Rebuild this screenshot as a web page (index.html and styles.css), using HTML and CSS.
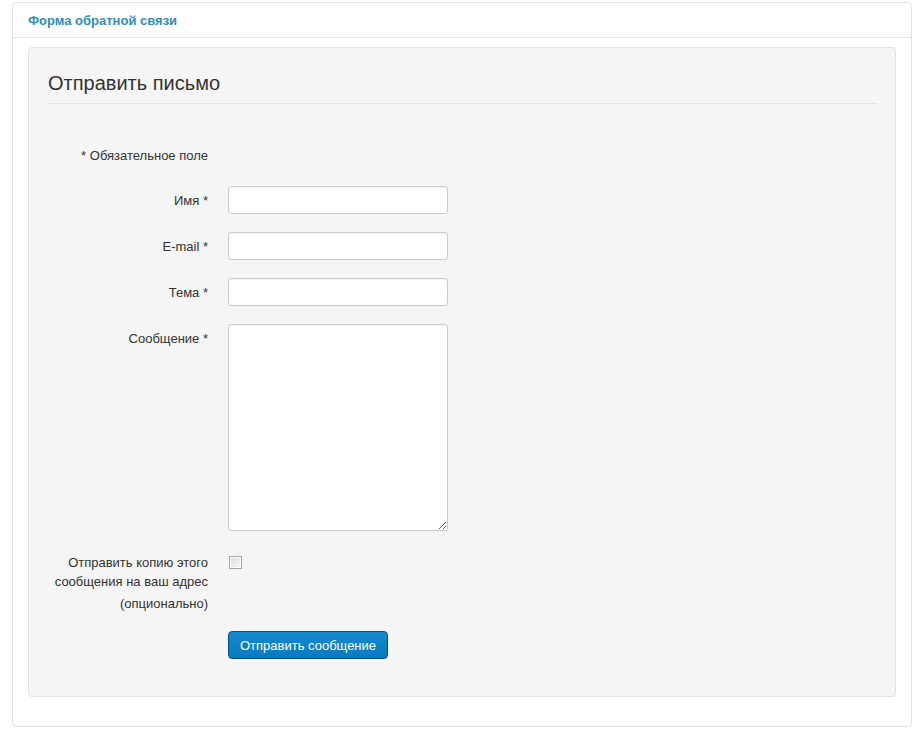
FILE: index.html
```html
<!doctype html>
<html>
<head>
<meta charset="UTF-8">
<title>Форма обратной связи</title>
<link rel="stylesheet" href="styles.css">
</head>
<body>
	<div class="panel">
		<div class="panel-head">Форма обратной связи</div>
		<div class="well">
			<h2>Отправить письмо</h2>
			<form class="form">
				<div class="row row-note">
					<div class="label">* Обязательное поле</div>
				</div>
				<div class="row">
					<label class="label">Имя *</label>
					<div class="controls"><input type="text" class="field"></div>
				</div>
				<div class="row">
					<label class="label">E-mail *</label>
					<div class="controls"><input type="text" class="field"></div>
				</div>
				<div class="row">
					<label class="label">Тема *</label>
					<div class="controls"><input type="text" class="field"></div>
				</div>
				<div class="row">
					<label class="label">Сообщение *</label>
					<div class="controls"><textarea class="field area"></textarea></div>
				</div>
				<div class="row row-copy">
					<label class="label label-copy">Отправить копию этого сообщения на ваш адрес<span class="opt">(опционально)</span></label>
					<div class="controls"><span class="check"></span></div>
				</div>
				<div class="row">
					<div class="label"></div>
					<div class="controls"><button type="button" class="btn">Отправить сообщение</button></div>
				</div>
			</form>
		</div>
	</div>
</body>
</html>
```

FILE: styles.css
```css
* { box-sizing: border-box }
body {
	margin: 0;
	padding: 2px 6px 0 12px;
	font-family: "Liberation Sans", Arial, sans-serif;
	font-size: 13px;
	color: #333;
	background: #fff;
}
.panel {
	width: 900px;
	height: 725px;
	border: 1px solid #e2e2e2;
	border-radius: 4px;
	background: #fff;
}
.panel-head {
	height: 35px;
	padding: 10px 15px 0;
	border-bottom: 1px solid #e6e6e6;
	color: #2f8fba;
	font-weight: bold;
	font-size: 13px;
}
.well {
	margin: 9px 15px 0;
	height: 650px;
	padding: 23px 18px 0 19px;
	background: #f5f5f5;
	border: 1px solid #e3e3e3;
	border-radius: 4px;
}
h2 {
	margin: 0;
	padding-bottom: 8px;
	border-bottom: 1px solid #e5e5e5;
	font-size: 20px;
	font-weight: normal;
	line-height: 24px;
	color: #333;
}
.form { padding-top: 37px }
.row {
	display: flex;
	margin-bottom: 18px;
}
.row-note { margin-bottom: 22px }
.label {
	width: 160px;
	padding-top: 7px;
	text-align: right;
	line-height: 16px;
}
.controls { margin-left: 20px }
.field {
	display: block;
	width: 220px;
	height: 28px;
	padding: 4px 6px;
	border: 1px solid #ccc;
	border-radius: 3px;
	background: #fff;
	box-shadow: inset 0 1px 1px rgba(0, 0, 0, 0.05);
	font: inherit;
}
.area {
	height: 207px;
	resize: vertical;
}
.row-copy { margin-bottom: 18px }
.label-copy {
	padding-top: 4px;
	line-height: 19px;
}
.opt {
	display: block;
	margin-top: 3px;
}
.check {
	display: block;
	margin: 7px 0 0 1px;
	width: 13px;
	height: 13px;
	border: 1px solid #a5a5a5;
	background: linear-gradient(135deg, #dcdcdc, #f6f6f6);
	box-shadow: inset 0 0 0 1px #fff;
}
.btn {
	width: 160px;
	height: 28px;
	padding: 0;
	border: 1px solid #0b4d7e;
	border-radius: 4px;
	background: linear-gradient(#1589cf, #0a7ac0);
	color: #fff;
	font: inherit;
	font-size: 13px;
}
```
